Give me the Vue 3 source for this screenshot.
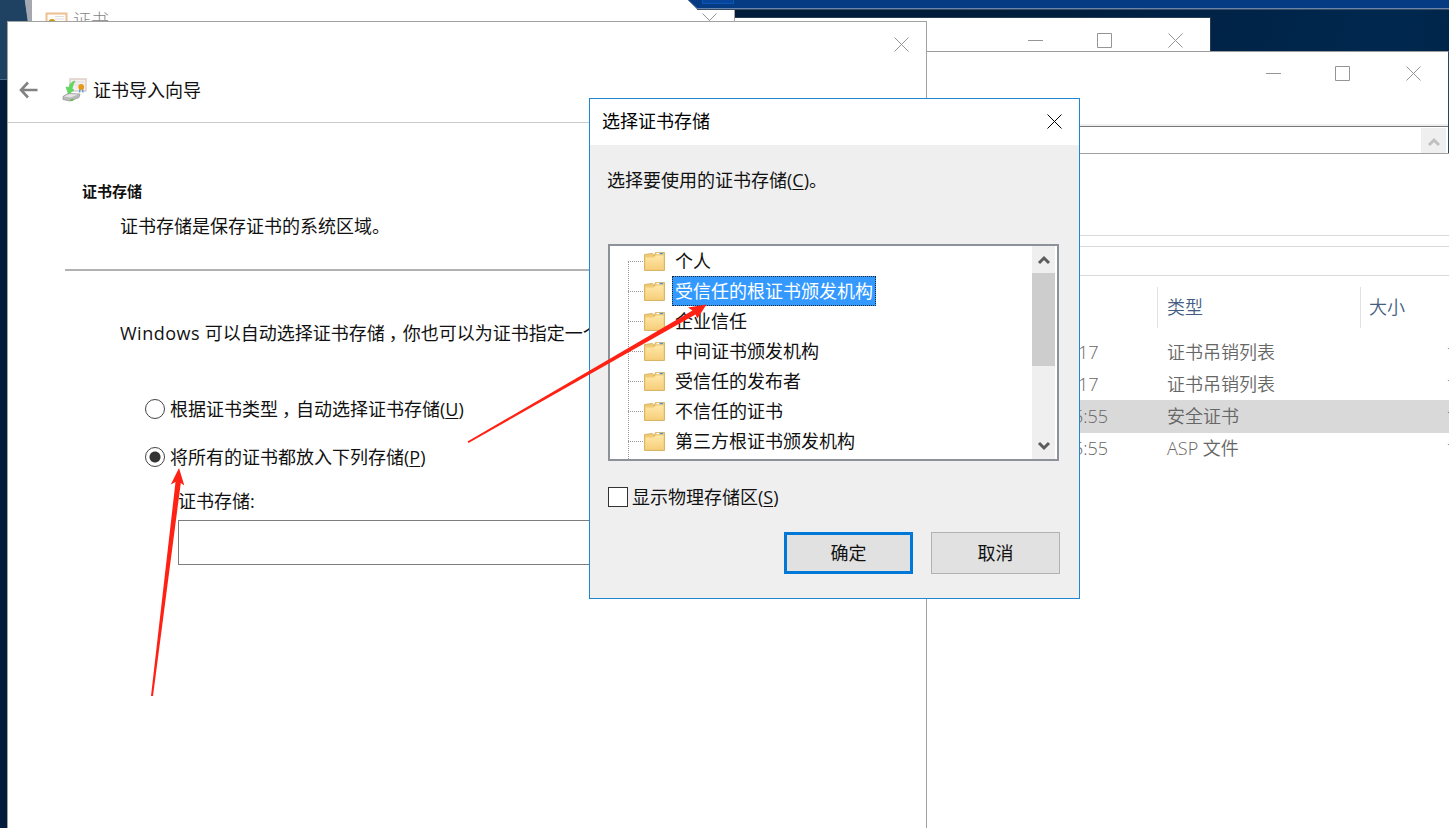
<template>
  <div class="desktop">
    <div class="glow"></div>

    <div v-for="name in ['back', 'middle']" :key="name" class="window" :class="name">
      <div class="controls">
        <svg class="glyph" viewBox="0 0 15 15"><path d="M0 7.500H15" /></svg>
        <svg class="glyph" viewBox="0 0 15 15"><path d="M.5 .5H14.500V14.500H.5Z" /></svg>
        <svg class="glyph" viewBox="0 0 15 15"><path d="M.5 .5l14 14M14.500 .5l-14 14" /></svg>
      </div>
      <div v-if="name === 'middle'" class="strip">
        <div class="strip-button">
          <svg width="12" height="10" viewBox="0 0 12 10"><path d="M1 8L6 3l5 5" fill="none" stroke="#bfbfbf" stroke-width="3" /></svg>
        </div>
      </div>
    </div>

    <div class="window cert">
      <svg class="cert-icon" width="24" height="18" viewBox="0 0 24 18">
        <rect x="1.5" y="1.5" width="20" height="15" fill="#fffdf9" stroke="#eebf91" stroke-width="2" />
        <path d="M10 4.500H19M10 7H19" stroke="#ddd" />
        <circle cx="7" cy="10.500" r="3.500" fill="#c99a0c" />
      </svg>
      <span class="cert-title">证书</span>
      <svg class="glyph" viewBox="0 0 15 15"><path d="M.5 .5l14 14M14.500 .5l-14 14" /></svg>
    </div>

    <svg class="connection-bar" width="762" height="10" viewBox="0 0 762 10">
      <path d="M1 0H762V9.500H10.500Z" fill="#053b82" />
      <rect x="15.500" y="-2" width="31" height="5.500" fill="#06459a" stroke="#0a55b5" />
      <path d="M1 0L10 8.500H762" fill="none" stroke="#6686b0" />
      <path d="M10 9.500H762" stroke="#3a4a60" />
    </svg>

    <div class="window explorer">
      <div class="bar address"></div>
      <div class="bar gap"></div>
      <div class="bar tools"></div>
      <div class="columns head">
        <span class="date"></span>
        <span class="type">类型</span>
        <span class="size">大小</span>
      </div>
      <div v-for="(file, i) in files" :key="i" class="columns file" :class="{ picked: file.picked }">
        <span class="date">{{ file.time }}</span>
        <span class="type">{{ file.type }}</span>
        <span class="amount">1</span>
      </div>
    </div>

    <div class="window wizard">
      <div class="wizard-caption">
        <svg class="glyph" viewBox="0 0 15 15"><path d="M.5 .5l14 14M14.500 .5l-14 14" /></svg>
      </div>
      <div class="wizard-head">
        <svg class="arrow-back" width="19" height="18" viewBox="0 0 19 18">
          <path d="M18.500 9H2.500M9 1.500L2 9l7 7.500" fill="none" stroke="#828282" stroke-width="2.600" />
        </svg>
        <svg class="import-icon" width="26" height="26" viewBox="0 0 26 26">
          <path d="M8 2H24V14H8Z" fill="#f5efeb" stroke="#dccfc9" stroke-width="1.500" />
          <path d="M10.500 5H22M13 8H17" stroke="#dcdce0" />
          <path d="M1 19.500L6 16.500L18 17L17 20.500L8 24L1 22.500Z" fill="#b9b9b9" stroke="#999" stroke-width=".8" />
          <path d="M2 19.500L7 17L16 17.500L8.500 20.500Z" fill="#e4e4e4" />
          <path d="M8.500 23.500l3-1" stroke="#55bd35" stroke-width="1.500" />
          <path d="M13 4C9 5 7.500 8 7 10.500L4 10L6.500 17L12 13L10 12C10.500 9 11.500 7 13 4Z" fill="#5fdc5c" stroke="#56c35c" stroke-width=".6" />
          <path d="M18 12l-.5 3.500M20.500 12l.5 3.500" stroke="#5d9fe0" stroke-width="1.500" fill="none" />
          <circle cx="19.200" cy="10" r="2.900" fill="#e39a1c" />
        </svg>
        <span>证书导入向导</span>
      </div>
      <div class="wizard-body">
        <h1>证书存储</h1>
        <p class="lead">证书存储是保存证书的系统区域。</p>
        <hr />
        <p class="hint"><span class="latin">Windows</span> 可以自动选择证书存储<i>，</i>你也可以为证书指定一个证书的位置。</p>
        <div class="choice first">
          <span class="radio"></span>
          <span>根据证书类型<i>，</i>自动选择证书存储(<u>U</u>)</span>
        </div>
        <div class="choice second">
          <span class="radio on"></span>
          <span>将所有的证书都放入下列存储(<u>P</u>)</span>
        </div>
        <div class="store">
          <label>证书存储:</label>
          <div class="store-input"></div>
        </div>
      </div>
    </div>

    <div class="window dialog">
      <div class="dialog-caption">
        <span>选择证书存储</span>
        <svg class="glyph dark" viewBox="0 0 15 15"><path d="M.5 .5l14 14M14.500 .5l-14 14" /></svg>
      </div>
      <div class="dialog-body">
        <p class="prompt">选择要使用的证书存储(<u>C</u>)。</p>
        <div class="listbox">
          <ul class="tree">
            <li v-for="(store, i) in stores" :key="store" :class="{ selected: i === 1 }">
              <span class="branch"></span>
              <svg class="folder" width="23" height="21" viewBox="0 0 23 21">
                <path d="M1.500 3.500L9.500 2.500L11 5L12.500 1.500H21.500V19.500H1.500Z" fill="#f0ca75" stroke="#d9b566" />
                <path d="M2.500 6.500H11L13 4.500H20.500V18.500H2.500Z" fill="url(#paper)" />
                <path d="M13.500 2.500H20" stroke="#fff6dc" stroke-width="1.500" />
                <path d="M16.500 2.500H20" stroke="#5295c8" stroke-width="1.500" />
              </svg>
              <span class="store-name">{{ store }}</span>
            </li>
          </ul>
          <div class="scrollbar">
            <svg width="14" height="10" viewBox="0 0 14 10"><path d="M2 8L7 3l5 5" /></svg>
            <div class="thumb"></div>
            <svg width="14" height="10" viewBox="0 0 14 10"><path d="M2 2l5 5 5-5" /></svg>
          </div>
        </div>
        <div class="physical">
          <span class="checkbox"></span>
          <span>显示物理存储区(<u>S</u>)</span>
        </div>
        <div class="actions">
          <button class="primary">确定</button>
          <button>取消</button>
        </div>
      </div>
    </div>

    <svg class="marks" width="1449" height="828" viewBox="0 0 1449 828">
      <defs>
        <linearGradient id="paper" x1="0" y1="0" x2="0" y2="1">
          <stop offset="0" stop-color="#ffe7a6" />
          <stop offset="1" stop-color="#f6cf7c" />
        </linearGradient>
      </defs>
      <path d="M179 468L184.300 485.500L180.800 483L153 696H151L175.500 482L170.800 484.500Z" />
      <path d="M706.500 304.500L697.300 318.500L695.500 314.500L600 368.500L468.500 443L467.500 441.500L600 364.500L692.500 310.500L688 307.500Z" />
    </svg>
  </div>
</template>

<script setup>
const files = [
  { time: '17', type: '证书吊销列表' },
  { time: '17', type: '证书吊销列表' },
  { time: '5:55', type: '安全证书', picked: true },
  { time: '5:55', type: 'ASP 文件' }
]

const stores = [
  '个人',
  '受信任的根证书颁发机构',
  '企业信任',
  '中间证书颁发机构',
  '受信任的发布者',
  '不信任的证书',
  '第三方根证书颁发机构'
]
</script>

<style>
body {
  margin: 0;
  overflow: hidden;
}
</style>

<style scoped>
.desktop {
  position: relative;
  width: 1449px;
  height: 828px;
  overflow: hidden;
  background: linear-gradient(100deg, #001c3a 60%, #00284f 88%, #001c3a 100%);
  font-family: 'Open Sans', 'Noto Sans CJK SC', sans-serif;
  font-size: 18px;
  line-height: 24px;
  color: #111;
}
.desktop * {
  box-sizing: border-box;
}
p, h1, ul {
  margin: 0;
  padding: 0;
}
.glow {
  position: absolute;
  left: 0;
  top: 0;
  width: 31px;
  height: 80px;
  background: linear-gradient(82deg, #1f4263 84%, #a3a8b2 86%);
  border-bottom: 1px solid #4a6a86;
}
.window {
  position: absolute;
  background: #fff;
}
.glyph {
  width: 15px;
  height: 15px;
  flex: none;
  fill: none;
  stroke: #959595;
  stroke-width: 1;
}
.glyph.dark {
  stroke: #000;
}
.cert {
  left: 31px;
  top: -10px;
  width: 704px;
  height: 60px;
  border: 1px solid #a7a7a7;
  display: flex;
  padding: 20px 17px 0 13px;
}
.cert-icon {
  margin-top: 1px;
}
.cert-title {
  flex: 1;
  margin-left: 4px;
  margin-top: -3px;
  color: #858585;
  font-weight: 300;
}
.cert .glyph {
  margin-top: 2px;
}
.connection-bar {
  position: absolute;
  left: 687px;
  top: 0;
}
.controls {
  display: flex;
  justify-content: flex-end;
  gap: 54px;
}
.controls .glyph:nth-child(2) {
  margin-right: 2px;
}
.back {
  left: 700px;
  top: 17px;
  width: 511px;
  height: 60px;
  border: 1px solid #243c54;
  padding: 15px 27px 0 0;
}
.middle {
  left: 900px;
  top: 51px;
  width: 549px;
  height: 120px;
  border: 1px solid #2a4560;
  border-top-color: #9c9c9c;
  padding-top: 14px;
}
.middle .controls {
  padding-right: 27px;
}
.strip {
  display: flex;
  justify-content: flex-end;
  margin-top: 43px;
  height: 29px;
  border-top: 2px solid #f0f0f0;
  box-shadow: inset 0 1px #777;
  padding: 2px 2px 0 0;
}
.strip-button {
  width: 25px;
  background: #efefef;
  display: flex;
  align-items: center;
  justify-content: center;
  padding-top: 3px;
}
.explorer {
  left: 900px;
  top: 153px;
  width: 549px;
  height: 675px;
  border-top: 1px solid #a0a0a0;
  overflow: hidden;
}
.bar {
  border-bottom: 1px solid #d9d9d9;
}
.address {
  height: 82px;
}
.gap {
  height: 11px;
}
.tools {
  height: 29px;
}
.columns {
  display: grid;
  grid-template-columns: 257px 203px 1fr;
  color: #666;
  font-weight: 350;
}
.head {
  margin: 11px 0 9px;
  height: 40px;
  line-height: 41px;
  color: #435d80;
}
.head .type,
.head .size {
  border-left: 1px solid #e2e2e2;
  padding-left: 9px;
}
.head .size {
  padding-left: 8px;
}
.file {
  height: 32px;
  line-height: 32px;
}
.file.picked {
  height: 33px;
  margin-bottom: -1px;
  background: #d9d9d9;
}
.file .date {
  padding-left: 178px;
}
.picked .date,
.picked + .file .date {
  padding-left: 173px;
}
.file .type {
  padding-left: 10px;
}
.amount {
  padding-left: 86px;
}
.wizard {
  left: 7px;
  top: 21px;
  width: 920px;
  height: 820px;
  border: 1px solid #a2a2a2;
}
.wizard-caption {
  display: flex;
  justify-content: flex-end;
  height: 46px;
  padding: 15px 17px 0 0;
}
.wizard-head {
  display: flex;
  align-items: center;
  height: 55px;
  padding: 0 0 10px 11px;
  border-bottom: 1px solid #cbcbcb;
}
.import-icon {
  margin: 0 5px 0 24px;
}
.wizard-body {
  padding-top: 56px;
}
h1 {
  padding-left: 74px;
  font-size: 15px;
  line-height: 24px;
  font-weight: 700;
}
.lead {
  margin-top: 11px;
  padding-left: 112px;
}
hr {
  height: 2px;
  margin: 31px 0 0 57px;
  border: 0;
  background: #b1b1b1;
}
.hint {
  margin-top: 50px;
  padding-left: 112px;
  white-space: nowrap;
}
.latin {
  letter-spacing: .5px;
}
i {
  font-style: normal;
  margin: 0 -4px 0 4px;
}
u {
  text-underline-offset: 2px;
  text-decoration-thickness: 1px;
}
.choice {
  display: flex;
  align-items: center;
  gap: 5px;
  padding-left: 137px;
}
.first {
  margin-top: 52px;
}
.second {
  margin-top: 24px;
}
.radio {
  width: 20px;
  height: 20px;
  border: 1.5px solid #444;
  border-radius: 50%;
}
.radio.on {
  background: radial-gradient(circle, #333 5px, #fff 6px);
}
.store {
  margin-top: 20px;
  padding-left: 170px;
}
label {
  display: block;
}
.store-input {
  margin-top: 7px;
  height: 45px;
  border: 1.5px solid #7d7d7d;
}
.dialog {
  left: 589px;
  top: 98px;
  width: 491px;
  height: 501px;
  border: 1px solid #1f85d5;
}
.dialog-caption {
  display: flex;
  align-items: center;
  justify-content: space-between;
  height: 46px;
  padding: 0 17px 2px 12px;
  color: #000;
}
.dialog-body {
  height: 453px;
  background: #efefef;
  padding: 23px 19px 0 18px;
}
.prompt {
  margin-left: -1px;
}
.listbox {
  display: flex;
  width: 451px;
  height: 217px;
  margin-top: 52px;
  background: #fff;
  border: 2px solid #8d9298;
}
.tree {
  flex: 1;
  list-style: none;
  background: linear-gradient(#999 50%, transparent 50%) 18px 16px / 1px 2px repeat-y;
  clip-path: inset(0);
}
.tree li {
  display: flex;
  align-items: center;
  height: 30px;
  padding-left: 18px;
}
.tree li:first-child {
  background: linear-gradient(#fff, #fff) 18px 0 / 1px 16px no-repeat;
}
.branch {
  width: 15px;
  height: 1px;
  background: repeating-linear-gradient(90deg, #999 0 1px, transparent 1px 2px);
}
.folder {
  margin: 0 6px 0 0;
}
.store-name {
  height: 30px;
  line-height: 29px;
  padding: 0 2px;
  border: 1px solid transparent;
}
.selected .store-name {
  color: #fff;
  background: #3399ff;
  border: 1px dotted #1c2a38;
}
.scrollbar {
  width: 23px;
  margin-right: 2px;
  background: #efefef;
  display: flex;
  flex-direction: column;
  align-items: center;
  padding: 9px 0 8px;
}
.scrollbar path {
  fill: none;
  stroke: #5c5c5c;
  stroke-width: 3;
}
.thumb {
  width: 23px;
  height: 93px;
  margin: 8px 0 auto;
  background: #cdcdcd;
}
.physical {
  display: flex;
  align-items: center;
  gap: 4px;
  margin-top: 24px;
}
.checkbox {
  width: 20px;
  height: 20px;
  background: #fff;
  border: 1.5px solid #333;
}
.actions {
  display: flex;
  justify-content: flex-end;
  gap: 18px;
  margin-top: 23px;
}
button {
  width: 129px;
  height: 42px;
  padding: 0 0 1px;
  border: 1.5px solid #b2b2b2;
  background: #e1e1e1;
  color: #111;
  font: inherit;
}
button.primary {
  border: 3px solid #0078d7;
}
.marks {
  position: absolute;
  left: 0;
  top: 0;
  pointer-events: none;
  fill: #ff2113;
}
</style>
